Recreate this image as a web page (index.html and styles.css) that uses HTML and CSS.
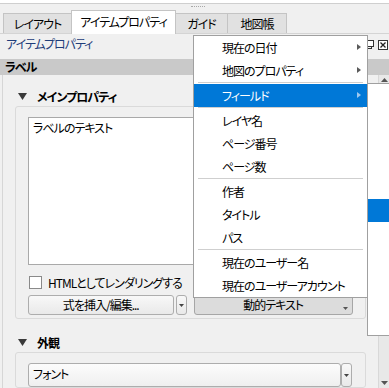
FILE: index.html
```html
<!DOCTYPE html>
<html lang="ja">
<head>
<meta charset="utf-8">
<link rel="stylesheet" href="styles.css">
</head>
<body>
<div class="top"></div>
<div class="grip"></div>
<div class="tabbar">
  <div class="tab t1">レイアウト</div>
  <div class="tab active">アイテムプロパティ</div>
  <div class="tab t3">ガイド</div>
  <div class="tab t4">地図帳</div>
</div>
<div class="pane">
  <div class="titlerow">
    <span class="ptitle">アイテムプロパティ</span>
    <span class="dockbtns">
      <svg width="9" height="9" viewBox="0 0 9 9"><rect x="0.5" y="2.5" width="6" height="6" fill="none" stroke="#333"/><rect x="2.5" y="0.5" width="6" height="6" fill="#fff" stroke="#333"/></svg>
      <svg width="10" height="10" viewBox="0 0 10 10"><rect x="0.5" y="0.5" width="9" height="9" fill="#fff" stroke="#333"/><path d="M2.5 2.5L7.5 7.5M7.5 2.5L2.5 7.5" stroke="#222" stroke-width="1.3"/></svg>
    </span>
  </div>
  <div class="header">ラベル</div>
  <div class="scroll">
    <div class="content">
      <div class="gtitle"><svg class="tri" width="9" height="7" viewBox="0 0 9 7"><polygon points="0,0 9,0 4.5,7" fill="#3a3a3a"/></svg>メインプロパティ</div>
      <div class="group">
        <div class="textedit">ラベルのテキスト</div>
        <div class="check"><span class="box"></span>HTMLとしてレンダリングする</div>
        <div class="btnrow">
          <div class="btn expr">式を挿入/編集...</div>
          <div class="btn drop"><svg width="5" height="3" viewBox="0 0 5 3"><polygon points="0,0 5,0 2.5,3" fill="#444"/></svg></div>
          <div class="btn dyn">動的テキスト<svg class="corner" width="5" height="3" viewBox="0 0 5 3"><polygon points="0,0 5,0 2.5,3" fill="#555"/></svg></div>
        </div>
      </div>
      <div class="gtitle g2"><svg class="tri" width="9" height="7" viewBox="0 0 9 7"><polygon points="0,0 9,0 4.5,7" fill="#3a3a3a"/></svg>外観</div>
      <div class="group g2box">
        <div class="fontrow">
          <div class="btn fontbtn">フォント</div>
          <div class="btn fdrop"><svg width="5" height="3" viewBox="0 0 5 3"><polygon points="0,0 5,0 2.5,3" fill="#444"/></svg></div>
        </div>
      </div>
    </div>
    <div class="vscroll">
      <svg class="up" width="7" height="4" viewBox="0 0 7 4"><polygon points="0,4 7,4 3.5,0" fill="#555"/></svg>
      <svg class="down" width="7" height="4" viewBox="0 0 7 4"><polygon points="0,0 7,0 3.5,4" fill="#555"/></svg>
    </div>
  </div>
</div>

<div class="submenu">
  <div class="sitem"></div><div class="sitem"></div><div class="sitem"></div><div class="sitem"></div><div class="sitem"></div>
  <div class="sitem hl"></div>
</div>

<div class="menu">
  <div class="mi sub">現在の日付</div>
  <div class="mi sub">地図のプロパティ</div>
  <div class="sep"></div>
  <div class="mi sub hl">フィールド</div>
  <div class="sep"></div>
  <div class="mi">レイヤ名</div>
  <div class="mi">ページ番号</div>
  <div class="mi">ページ数</div>
  <div class="sep"></div>
  <div class="mi">作者</div>
  <div class="mi">タイトル</div>
  <div class="mi">パス</div>
  <div class="sep"></div>
  <div class="mi">現在のユーザー名</div>
  <div class="mi">現在のユーザーアカウント</div>
</div>
</body>
</html>
```

FILE: styles.css
```css
html, body {
  margin: 0;
  padding: 0;
}
body {
  width: 389px;
  height: 388px;
  overflow: hidden;
  background: #f0f0f0;
  font-family: "Noto Sans CJK JP", "Noto Sans", sans-serif;
  font-size: 12px;
  font-feature-settings: "palt" 1;
  letter-spacing: -1px;
  color: #000;
  position: relative;
}
.top {
  height: 3px;
  background: #fff;
  border-bottom: 1px solid #cfcfcf;
}
.grip {
  margin: 2px 0 0 191px;
  width: 14px;
  height: 3px;
  border-top: 1px dotted #a8a8a8;
}
.tabbar {
  display: flex;
  align-items: flex-end;
  height: 23px;
  padding-left: 3px;
}
.tab {
  box-sizing: border-box;
  height: 20px;
  border: 1px solid #c4c4c4;
  border-bottom: none;
  border-right: none;
  background: #e1e1e1;
  text-align: center;
  line-height: 20px;
}
.t1 { width: 68px; }
.t3 { width: 51px; }
.t4 { width: 60px; border-right: 1px solid #c4c4c4; }
.tab.active {
  position: relative;
  width: 105px;
  height: 24px;
  margin-bottom: -1px;
  background: #fff;
  line-height: 22px;
  border-right: 1px solid #c4c4c4;
}
.tab.active + .tab { border-left: none; }
.pane {
  border-top: 1px solid #d4d4d4;
}
.titlerow {
  height: 25px;
  display: flex;
  justify-content: space-between;
  align-items: flex-start;
}
.ptitle {
  padding-left: 6px;
  padding-top: 2px;
  color: #1f3d7a;
  line-height: 16px;
}
.dockbtns {
  display: flex;
  gap: 4px;
  padding-right: 1px;
  margin-top: 6px;
}
.header {
  height: 16px;
  line-height: 16px;
  background: #c9c9c9;
  font-weight: bold;
  padding-left: 5px;
}
.scroll {
  display: flex;
  height: 313px;
  margin-left: 2px;
  border-left: 1px solid #d6d6d6;
}
.content {
  width: 375px;
  padding-top: 11px;
}
.gtitle {
  height: 20px;
  display: flex;
  align-items: center;
  padding-left: 15px;
  font-weight: bold;
}
.gtitle .tri {
  margin-right: 10px;
}
.gtitle.g2 {
  margin-top: 13px;
}
.group {
  margin: 0 12px;
  border: 1px solid #dadada;
  border-radius: 3px;
  padding: 10px 12px 3px 12px;
}
.group.g2box {
  padding-top: 10px;
  padding-bottom: 0;
}
.textedit {
  box-sizing: border-box;
  height: 148px;
  background: #fff;
  border: 1px solid #a9a9a9;
  padding: 2px 4px;
  line-height: 16px;
}
.check {
  height: 20px;
  margin-top: 7px;
  display: flex;
  align-items: center;
  padding-left: 1px;
}
.box {
  box-sizing: border-box;
  width: 13px;
  height: 13px;
  background: #fff;
  border: 1px solid #8a8a8a;
  margin-right: 6px;
}
.btnrow {
  display: flex;
  margin-top: 3px;
  height: 20px;
}
.btn {
  box-sizing: border-box;
  height: 20px;
  border: 1px solid #adadad;
  border-radius: 3px;
  background: linear-gradient(#f8f8f8, #e9e9e9);
  display: flex;
  align-items: center;
  justify-content: center;
  line-height: 18px;
}
.expr { width: 146px; }
.drop { width: 11px; margin-left: 2px; }
.dyn {
  width: 160px;
  margin-left: 7px;
  background: #dcdcdc;
  border-color: #a6a6a6;
  position: relative;
}
.corner {
  position: absolute;
  right: 4px;
  bottom: 4px;
}
.fontrow {
  display: flex;
  height: 24px;
}
.fontbtn {
  width: 313px;
  height: 24px;
  justify-content: flex-start;
  padding-left: 4px;
  align-items: flex-start;
  padding-top: 1px;
  background: linear-gradient(#fcfcfc, #efefef);
}
.fdrop {
  width: 11px;
  height: 24px;
  margin-left: 0;
}
.vscroll {
  width: 11px;
  background: #e8e8e8;
  border-left: 1px solid #d8d8d8;
  display: flex;
  flex-direction: column;
  justify-content: space-between;
  align-items: center;
  padding: 3px 0 3px 0;
  box-sizing: border-box;
}
.menu {
  position: absolute;
  left: 193px;
  top: 35px;
  width: 173px;
  background: #fff;
  border: 1px solid #a0a0a0;
  z-index: 3;
}
.mi {
  height: 23px;
  line-height: 23px;
  padding-left: 28px;
  position: relative;
  white-space: nowrap;
}
.mi.sub::after {
  content: "";
  position: absolute;
  right: 6px;
  top: 8px;
  border-left: 4px solid #5a5a5a;
  border-top: 3.5px solid transparent;
  border-bottom: 3.5px solid transparent;
}
.mi.hl {
  background: #0078d7;
  color: #fff;
}
.mi.hl::after {
  border-left-color: #9ec8ee;
}
.sep {
  height: 1px;
  background: #cfcfcf;
  margin: 0 4px 1px 4px;
}
.submenu {
  position: absolute;
  left: 367px;
  top: 83px;
  width: 21px;
  height: 251px;
  background: #fff;
  border: 1px solid #a0a0a0;
  border-right: none;
  z-index: 2;
}
.sitem {
  height: 23px;
}
.sitem.hl {
  background: #0078d7;
}
```
